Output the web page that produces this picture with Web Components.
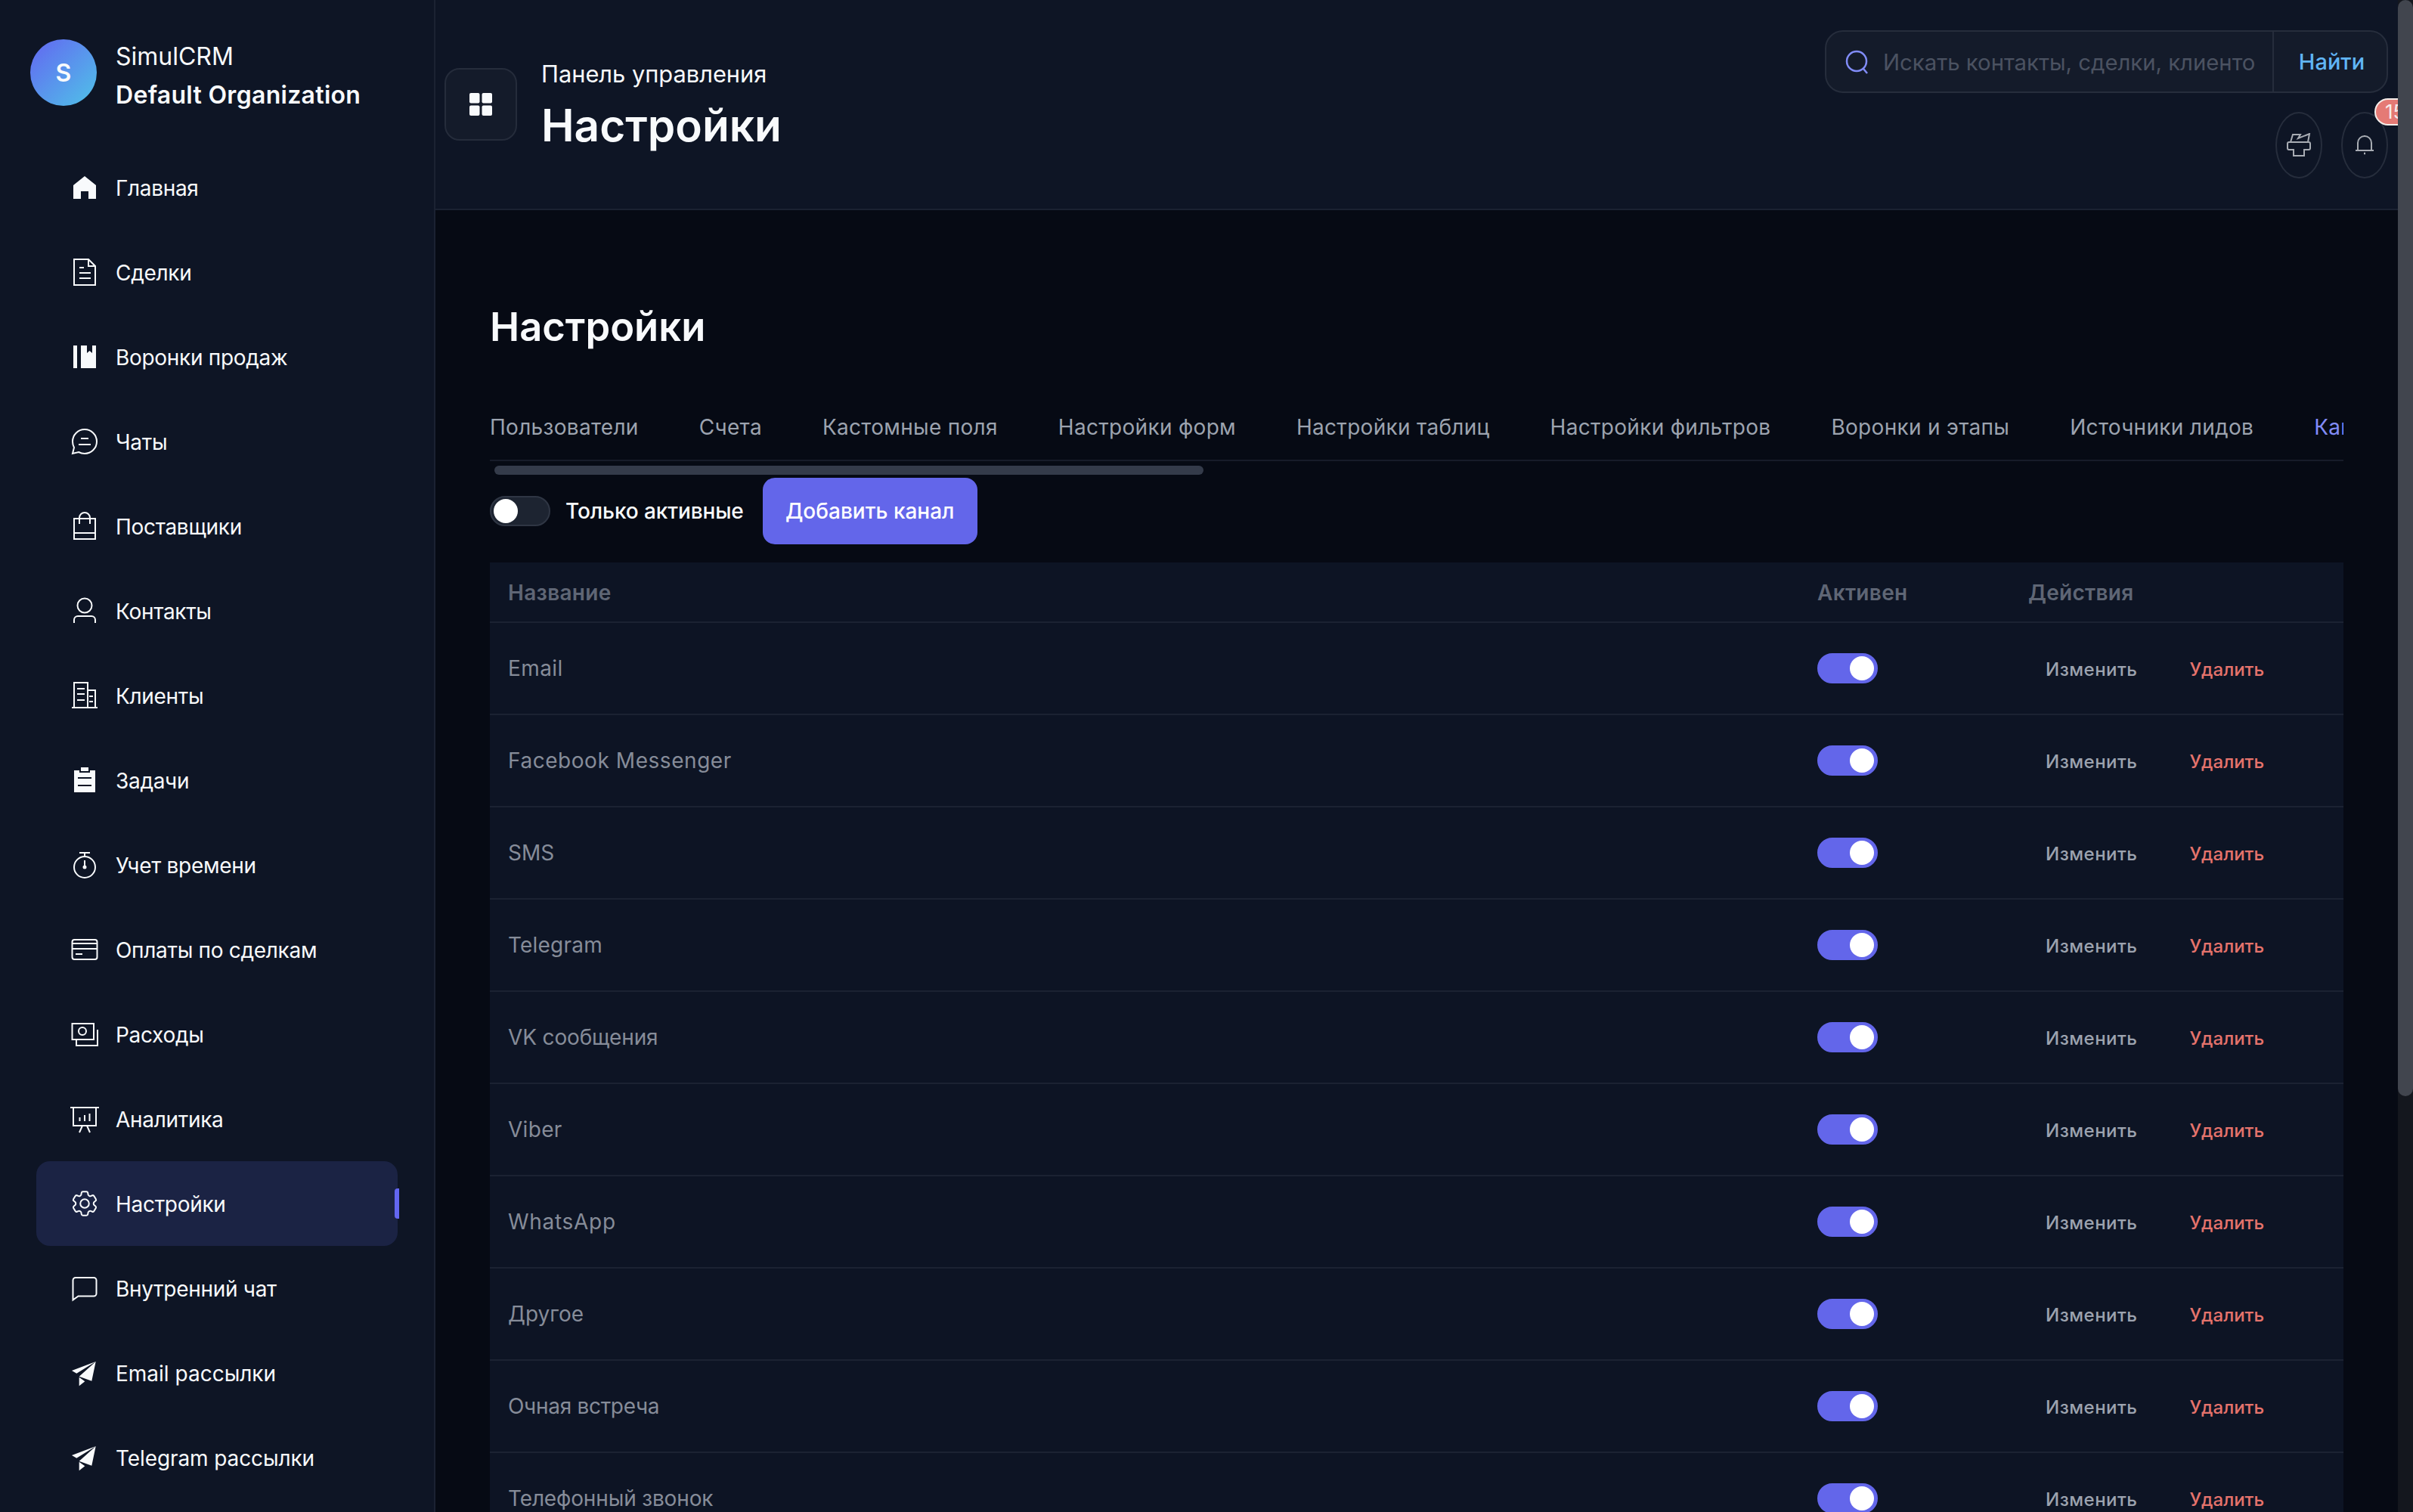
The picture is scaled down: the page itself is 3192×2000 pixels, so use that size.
<!DOCTYPE html>
<html lang="ru">
<head>
<meta charset="utf-8">
<title>SimulCRM</title>
<style>
  html, body { margin: 0; height: 100%; }
  body {
    background: #060a14;
    color: #f8fafc;
    font-family: Inter, "Noto Sans", sans-serif;
    overflow: hidden;
  }
</style>
</head>
<body>
<crm-app></crm-app>

<script>
const ICONS = {
  home: '<path fill="currentColor" stroke="none" d="M20 5 35 17V35H25V25H15V35H5V17Z"/>',
  doc: '<path d="M6 3H25L34 12V37H6ZM25 3V12H34M13 14H19M13 21H28M13 28H28"/>',
  funnel: '<path fill="currentColor" stroke="none" d="M5 5h5v30H5zM15 5h8v10l3.500-3 3.500 3V5h5v30H15z"/>',
  chat: '<path d="M20 4a16 16 0 0 1 0 32c-3 0-5.500-.7-8-2l-8 2 2-8c-1.300-2.400-2-5-2-8A16 16 0 0 1 20 4ZM15 16H25M12 24H28"/>',
  bag: '<path d="M6 10H34V37H6ZM6 29H34M13 17V9a7 7 0 0 1 14 0V17"/>',
  user: '<circle cx="20" cy="13" r="9.500"/><path d="M6 36V32a5 5 0 0 1 5-5H29a5 5 0 0 1 5 5V36"/>',
  building: '<path d="M3 36H37M6 36V3H24V36M24 13H34V36M10 11H20M10 18H20M10 26H20M26 21H31M26 28H31"/>',
  clipboard: '<path fill="currentColor" stroke="none" fill-rule="evenodd" d="M15 3H25V8H15ZM6 7H13V10H27V7H34V36H6ZM11 16V18H29V16ZM11 26V28H29V26Z"/>',
  timer: '<circle cx="20" cy="23" r="14"/><path d="M13 4H27M20 4V9M20 14V23"/><circle cx="20" cy="23" r="1.500" fill="currentColor"/>',
  card: '<rect x="3.500" y="7" width="33" height="26" rx="3"/><path d="M3.500 12H36.500M3.500 19H36.500M8 26H17"/>',
  money: '<path d="M3.500 6H32V27H3.500ZM37 14V35H9V27"/><circle cx="17" cy="16" r="5"/>',
  board: '<path d="M1 5H39M5 5V29H35V5M17 29 13 38M23 29 27 38M13.500 18V23M20 15V23M26.500 13V23"/>',
  gear: '<g transform="translate(20 20) scale(1.750) translate(-12 -12)"><path stroke-width="1.150" d="M9.594 3.940c.09-.542.56-.94 1.110-.94h2.593c.55 0 1.020.398 1.110.94l.213 1.281c.063.374.313.686.645.870.074.04.147.083.22.127.324.196.72.257 1.075.124l1.217-.456a1.125 1.125 0 0 1 1.370.49l1.296 2.247a1.125 1.125 0 0 1-.26 1.431l-1.003.827c-.293.24-.438.613-.431.992a6.759 6.759 0 0 1 0 .255c-.007.378.138.75.43.99l1.005.828c.424.35.534.954.26 1.430l-1.298 2.247a1.125 1.125 0 0 1-1.369.491l-1.217-.456c-.355-.133-.75-.072-1.076.124a6.570 6.570 0 0 1-.22.128c-.331.183-.581.495-.644.869l-.213 1.280c-.09.543-.56.941-1.110.941h-2.594c-.55 0-1.020-.398-1.110-.94l-.213-1.281c-.062-.374-.312-.686-.644-.87a6.520 6.520 0 0 1-.22-.127c-.325-.196-.72-.257-1.076-.124l-1.217.456a1.125 1.125 0 0 1-1.369-.49l-1.297-2.247a1.125 1.125 0 0 1 .26-1.431l1.004-.827c.292-.24.437-.613.43-.992a6.932 6.932 0 0 1 0-.255c.007-.378-.138-.75-.43-.99l-1.004-.828a1.125 1.125 0 0 1-.26-1.430l1.297-2.247a1.125 1.125 0 0 1 1.370-.491l1.216.456c.356.133.751.072 1.076-.124.072-.044.146-.087.22-.128.332-.183.582-.495.644-.869z"/><circle stroke-width="1.150" cx="12" cy="12" r="3.300"/></g>',
  bubble: '<path d="M8 6H32a3.500 3.500 0 0 1 3.500 3.500V27a3.500 3.500 0 0 1-3.500 3.500H11.500L4.500 35.500V9.500A3.500 3.500 0 0 1 8 6Z"/>',
  plane: '<path fill="currentColor" stroke="none" d="M34.700 5 3 17 9.300 20.700ZM34.700 5 12.700 24.700 29.300 30.700ZM12.700 25.700V37.300L20.300 31.300Z"/>'
};

const NAV = [
  ['home', 'Главная'], ['doc', 'Сделки'], ['funnel', 'Воронки продаж'], ['chat', 'Чаты'],
  ['bag', 'Поставщики'], ['user', 'Контакты'], ['building', 'Клиенты'], ['clipboard', 'Задачи'],
  ['timer', 'Учет времени'], ['card', 'Оплаты по сделкам'], ['money', 'Расходы'], ['board', 'Аналитика'],
  ['gear', 'Настройки', true], ['bubble', 'Внутренний чат'],
  ['plane', 'Email рассылки', false, 'letter-spacing:0'], ['plane', 'Telegram рассылки', false, 'letter-spacing:-0.1px']
];

const TABS = ['Пользователи', 'Счета', 'Кастомные поля', 'Настройки форм', 'Настройки таблиц',
  'Настройки фильтров', 'Воронки и этапы', 'Источники лидов', 'Каналы'];

// second value is the letter spacing that brings the row to the reference width
const CHANNELS = [['Email', .4], ['Facebook Messenger', .55], ['SMS', 0], ['Telegram', .2], ['VK сообщения', -.15],
  ['Viber', .3], ['WhatsApp', .7], ['Другое', 0], ['Очная встреча', -.3], ['Телефонный звонок', -.15]];

class NavItem extends HTMLElement {
  constructor() {
    super();
    this.shadowDOM = this.attachShadow({mode: 'open'});
  }

  connectedCallback() {
    const active = this.hasAttribute('active');
    this.shadowDOM.innerHTML = `
      <style>
        :host {
          display: flex;
          position: relative;
          align-items: center;
          height: 112px;
          flex: none;
          padding-left: 44px;
          gap: 21px;
          border-radius: 18px;
          font-size: 28px;
          letter-spacing: -0.3px;
          color: #f8fafc;
          ${active ? 'background: #1b2344;' : ''}
        }
        svg {
          width: 40px;
          height: 40px;
          flex: none;
          fill: none;
          stroke: currentColor;
          stroke-width: 2;
        }
        .label { padding-top: 1px; }
        .mark {
          position: absolute;
          right: -2px;
          top: 36px;
          width: 6px;
          height: 40px;
          background: #6366f1;
          border-radius: 4px 0 0 4px;
        }
      </style>
      <svg viewBox="0 0 40 40">${ICONS[this.getAttribute('icon')]}</svg>
      <span class="label"><slot></slot></span>
      ${active ? '<span class="mark"></span>' : ''}
    `;
  }
}
customElements.define('nav-item', NavItem);

class SideBar extends HTMLElement {
  constructor() {
    super();
    this.shadowDOM = this.attachShadow({mode: 'open'});
  }

  connectedCallback() {
    this.shadowDOM.innerHTML = `
      <style>
        :host {
          display: flex;
          flex-direction: column;
          flex: none;
          box-sizing: border-box;
          width: 576px;
          height: 2000px;
          overflow: hidden;
          background: #0e1525;
          border-right: 2px solid #1b2232;
        }
        .brand {
          display: flex;
          align-items: center;
          height: 192px;
          flex: none;
          box-sizing: border-box;
          padding: 0 0 0 40px;
          gap: 25px;
        }
        .logo {
          width: 88px;
          height: 88px;
          border-radius: 50%;
          flex: none;
          display: flex;
          align-items: center;
          justify-content: center;
          background: linear-gradient(135deg, #6366f1, #4fc3e8);
          font-size: 32px;
          font-weight: 600;
          color: #f8fafc;
        }
        .names {
          margin-top: 8px;
          font-size: 32px;
          line-height: 51px;
        }
        .names b { display: block; font-weight: 600; letter-spacing: 0.3px; }
        nav {
          display: flex;
          flex-direction: column;
          padding: 0 48px;
        }
      </style>
      <div class="brand">
        <div class="logo">S</div>
        <div class="names">SimulCRM<b>Default Organization</b></div>
      </div>
      <nav><slot></slot></nav>
    `;
  }
}
customElements.define('side-bar', SideBar);

class TopBar extends HTMLElement {
  constructor() {
    super();
    this.shadowDOM = this.attachShadow({mode: 'open'});
  }

  connectedCallback() {
    this.shadowDOM.innerHTML = `
      <style>
        :host {
          display: flex;
          box-sizing: border-box;
          height: 278px;
          flex: none;
          padding: 40px 13px 0 12px;
          justify-content: space-between;
          background: #0e1525;
          border-bottom: 2px solid #1b2232;
        }
        .left { display: flex; gap: 32px; padding-top: 50px; }
        .grid {
          box-sizing: border-box;
          width: 96px;
          height: 96px;
          display: flex;
          align-items: center;
          justify-content: center;
          background: #141b2a;
          border: 2px solid #252c3b;
          border-radius: 20px;
        }
        .grid svg { width: 30px; height: 30px; fill: #f8fafc; }
        .crumb { margin-top: -10px; font-size: 30.800px; line-height: 36px; color: #f8fafc; }
        h1 { margin: 16px 0 0; font-size: 58.500px; line-height: 68px; font-weight: 600; color: #f8fafc; }
        .right { display: flex; flex-direction: column; align-items: flex-end; gap: 25px; }
        .search {
          display: flex;
          box-sizing: border-box;
          width: 745px;
          height: 83px;
          background: #141b2a;
          border: 2px solid #262d3c;
          border-radius: 24px;
        }
        .field {
          display: flex;
          align-items: center;
          width: 592px;
          box-sizing: border-box;
          padding-left: 25px;
          gap: 18px;
          overflow: hidden;
          border-right: 2px solid #262d3c;
        }
        .field svg { width: 32px; height: 32px; flex: none; fill: none; stroke: #818cf8; stroke-width: 2.500; }
        .placeholder { font-size: 29.300px; padding-top: 2px; color: #4b5261; white-space: nowrap; }
        .go {
          flex: 1;
          display: flex;
          align-items: center;
          justify-content: center;
          padding-left: 4px;
          font-size: 29px;
          font-weight: 500;
          color: #60b5f5;
        }
        .tools { display: flex; gap: 25px; }
        .tool {
          position: relative;
          box-sizing: border-box;
          width: 62px;
          height: 88px;
          display: flex;
          align-items: center;
          justify-content: center;
          border: 2px solid #262d3c;
          border-radius: 50%;
          color: #a8acb3;
        }
        .tool svg { flex: none; fill: none; stroke: currentColor; stroke-width: 2; }
        .badge {
          position: absolute;
          left: 42px;
          top: -20px;
          box-sizing: border-box;
          height: 36px;
          width: 60px;
          padding-left: 12px;
          border-radius: 18px;
          background: #e57a75;
          border: 2px solid #f3ede9;
          font-size: 26px;
          line-height: 32px;
          color: #f8ecea;
        }
      </style>
      <div class="left">
        <div class="grid">
          <svg viewBox="0 0 30 30"><rect width="13.500" height="13.500" rx="2"/><rect x="16.500" width="13.500" height="13.500" rx="2"/><rect y="16.500" width="13.500" height="13.500" rx="2"/><rect x="16.500" y="16.500" width="13.500" height="13.500" rx="2"/></svg>
        </div>
        <div>
          <div class="crumb">Панель управления</div>
          <h1>Настройки</h1>
        </div>
      </div>
      <div class="right">
        <div class="search">
          <div class="field">
            <svg viewBox="0 0 32 32"><circle cx="15" cy="15" r="13"/><path d="M24 25 29 31"/></svg>
            <span class="placeholder">Искать контакты, сделки, клиенто</span>
          </div>
          <div class="go">Найти</div>
        </div>
        <div class="tools">
          <div class="tool">
            <svg width="34" height="32" viewBox="0 0 34 32"><path d="M6 12 9 2H19L16 7 31 1 29 12M4 12H30Q32 12 32 14V20Q32 22 30 22H24V30H10V22H4Q2 22 2 20V14Q2 12 4 12Z"/></svg>
          </div>
          <div class="tool">
            <svg width="26" height="28" viewBox="0 0 26 28"><path d="M1 21H25M4 21V11a9 9 0 0 1 18 0V21M13 2V1"/><path d="M12 25H14" stroke-width="2.500"/></svg>
            <span class="badge">15</span>
          </div>
        </div>
      </div>
    `;
  }
}
customElements.define('top-bar', TopBar);

class TabStrip extends HTMLElement {
  constructor() {
    super();
    this.shadowDOM = this.attachShadow({mode: 'open'});
  }

  connectedCallback() {
    const tabs = TABS.map((tab, i) =>
      `<span class="tab ${i === TABS.length - 1 ? 'on' : ''}">${tab}</span>`).join('');
    this.shadowDOM.innerHTML = `
      <style>
        :host { display: block; height: 104px; overflow: hidden; position: relative; }
        .tabs {
          display: flex;
          gap: 80px;
          height: 82px;
          box-sizing: border-box;
          border-bottom: 2px solid #171c29;
          overflow: hidden;
        }
        .tab {
          flex: none;
          font-size: 28px;
          letter-spacing: 0.3px;
          line-height: 48px;
          height: 82px;
          box-sizing: border-box;
          padding-top: 13px;
          color: #9ca3af;
          white-space: nowrap;
        }
        .on { color: #818cf8; border-bottom: 2px solid #6366f1; }
        .thumb {
          position: absolute;
          left: 6px;
          top: 88px;
          width: 938px;
          height: 12px;
          border-radius: 6px;
          background: #343b4a;
        }
      </style>
      <div class="tabs">${tabs}</div>
      <div class="thumb"></div>
    `;
  }
}
customElements.define('tab-strip', TabStrip);

class ToggleSwitch extends HTMLElement {
  constructor() {
    super();
    this.shadowDOM = this.attachShadow({mode: 'open'});
    this.shadowDOM.innerHTML = `
      <style>
        :host {
          display: flex;
          box-sizing: border-box;
          width: 80px;
          height: 40px;
          flex: none;
          align-items: center;
          padding: 0 3px;
          border-radius: 20px;
          background: #1d2431;
          border: 2px solid #2f3644;
        }
        :host([on]) {
          background: #6366ea;
          border-color: #6366ea;
          justify-content: flex-end;
        }
        i { width: 32px; height: 32px; border-radius: 50%; background: #fff; }
      </style>
      <i></i>
    `;
  }
}
customElements.define('toggle-switch', ToggleSwitch);

class ChannelRow extends HTMLElement {
  constructor() {
    super();
    this.shadowDOM = this.attachShadow({mode: 'open'});
  }

  connectedCallback() {
    this.shadowDOM.innerHTML = `
      <style>
        :host {
          display: grid;
          grid-template-columns: 1732px 279px 1fr;
          align-items: center;
          box-sizing: border-box;
          height: 122px;
          flex: none;
          padding-left: 24px;
          border-bottom: 2px solid #1b2232;
          font-size: 28px;
          color: #868c99;
        }
        .actions { display: flex; padding-left: 23px; font-size: 24px; font-weight: 500; letter-spacing: 0; gap: 69px; padding-top: 2px; }
        .edit { color: #9ca3af; letter-spacing: 0.5px; }
        .del { color: #e5736c; }
      </style>
      <span><slot></slot></span>
      <toggle-switch on></toggle-switch>
      <div class="actions"><span class="edit">Изменить</span><span class="del">Удалить</span></div>
    `;
  }
}
customElements.define('channel-row', ChannelRow);

class ChannelTable extends HTMLElement {
  constructor() {
    super();
    this.shadowDOM = this.attachShadow({mode: 'open'});
  }

  connectedCallback() {
    this.shadowDOM.innerHTML = `
      <style>
        :host { display: block; background: #0d1424; }
        .head {
          display: grid;
          grid-template-columns: 1732px 279px 1fr;
          align-items: center;
          box-sizing: border-box;
          height: 80px;
          padding: 2px 0 0 24px;
          border-bottom: 2px solid #1b2232;
          font-size: 28px;
          font-weight: 600;
          letter-spacing: 0.3px;
          color: #5f6675;
        }
      </style>
      <div class="head"><span>Название</span><span>Активен</span><span>Действия</span></div>
      <slot></slot>
    `;
  }
}
customElements.define('channel-table', ChannelTable);

class SettingsPage extends HTMLElement {
  constructor() {
    super();
    this.shadowDOM = this.attachShadow({mode: 'open'});
  }

  connectedCallback() {
    this.shadowDOM.innerHTML = `
      <style>
        :host {
          display: block;
          flex: 1;
          overflow: hidden;
          padding: 0 72px;
          background: #060a14;
        }
        h2 { margin: 122px 0 64px; font-size: 52.500px; line-height: 64px; font-weight: 600; color: #f8fafc; }
        .bar { display: flex; align-items: center; height: 88px; margin: 0 0 24px; }
        .bar toggle-switch { margin-right: 20px; }
        .label { font-size: 28px; font-weight: 500; letter-spacing: -0.1px; color: #f8fafc; margin-right: 25px; }
        .add {
          box-sizing: border-box;
          width: 284px;
          height: 88px;
          border-radius: 16px;
          background: #6366ea;
          display: flex;
          align-items: center;
          justify-content: center;
          font-size: 28px;
          font-weight: 500;
          color: #fff;
        }
      </style>
      <h2>Настройки</h2>
      <tab-strip></tab-strip>
      <div class="bar">
        <toggle-switch></toggle-switch>
        <span class="label">Только активные</span>
        <div class="add">Добавить канал</div>
      </div>
      <slot></slot>
    `;
  }
}
customElements.define('settings-page', SettingsPage);

class PageScrollbar extends HTMLElement {
  constructor() {
    super();
    this.shadowDOM = this.attachShadow({mode: 'open'});
    this.shadowDOM.innerHTML = `
      <style>
        :host { display: block; flex: none; width: 20px; height: 2000px; background: #14171e; }
        i { display: block; height: 1450px; border-radius: 10px; background: #41454e; }
      </style>
      <i></i>
    `;
  }
}
customElements.define('page-scrollbar', PageScrollbar);

class CrmApp extends HTMLElement {
  constructor() {
    super();
    this.shadowDOM = this.attachShadow({mode: 'open'});
  }

  connectedCallback() {
    const nav = NAV.map(([icon, label, active, style]) =>
      `<nav-item icon="${icon}" ${active ? 'active' : ''} style="${style || ''}">${label}</nav-item>`).join('');
    const rows = CHANNELS.map(([name, spacing]) =>
      `<channel-row style="letter-spacing:${spacing}px">${name}</channel-row>`).join('');
    this.shadowDOM.innerHTML = `
      <style>
        :host { display: flex; width: 3192px; height: 2000px; overflow: hidden; }
        .main { flex: 1; min-width: 0; display: flex; flex-direction: column; height: 2000px; overflow: hidden; }
      </style>
      <side-bar>${nav}</side-bar>
      <div class="main">
        <top-bar></top-bar>
        <settings-page><channel-table>${rows}</channel-table></settings-page>
      </div>
      <page-scrollbar></page-scrollbar>
    `;
  }
}
customElements.define('crm-app', CrmApp);
</script>
</body>
</html>
